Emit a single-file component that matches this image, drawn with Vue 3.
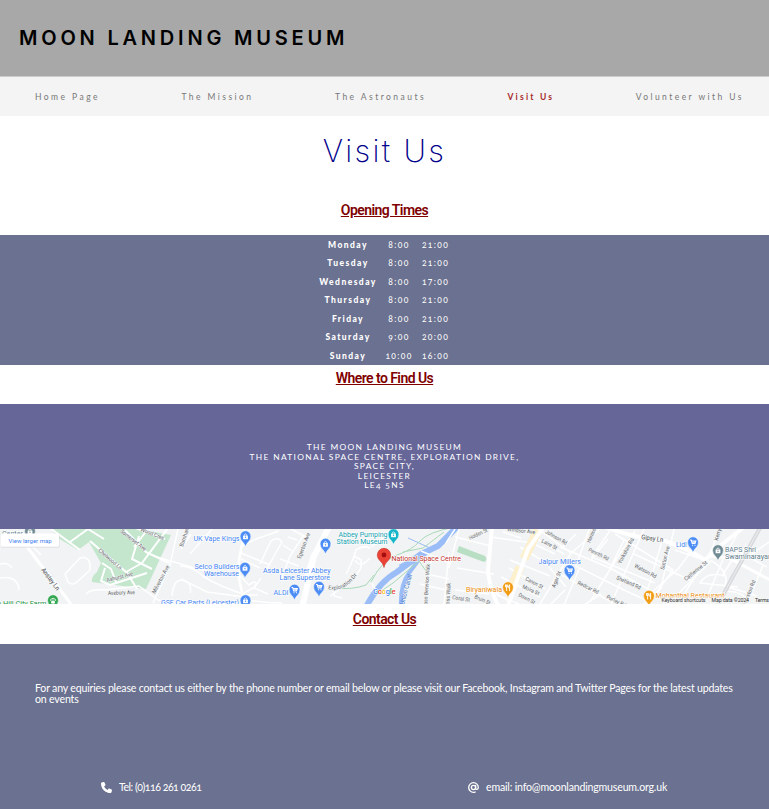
<script setup>
const links = [
  { label: 'Home Page', key: 'home' },
  { label: 'The Mission', key: 'mission' },
  { label: 'The Astronauts', key: 'astronauts' },
  { label: 'Visit Us', key: 'visit', active: true },
  { label: 'Volunteer with Us', key: 'volunteer' }
]

const hours = [
  ['Monday', '8:00', '21:00'],
  ['Tuesday', '8:00', '21:00'],
  ['Wednesday', '8:00', '17:00'],
  ['Thursday', '8:00', '21:00'],
  ['Friday', '8:00', '21:00'],
  ['Saturday', '9:00', '20:00'],
  ['Sunday', '10:00', '16:00']
]

// Map labels; x/y is the start of the baseline, w the drawn width, r the rotation.
const places = [
  { t: 'UK Vape Kings', x: 193.5, y: 12, w: 46, c: 'blue' },
  { t: 'Selco Builders', x: 194.5, y: 40, w: 45, c: 'blue' },
  { t: 'Warehouse', x: 204, y: 47, w: 35, c: 'blue' },
  { t: 'GSE Car Parts (Leicester)', x: 161, y: 76, w: 78, c: 'blue' },
  { t: 'Asda Leicester Abbey', x: 263, y: 43.5, w: 67.5, c: 'blue' },
  { t: 'Lane Superstore', x: 279.5, y: 50.5, w: 50.5, c: 'blue' },
  { t: 'ALDI', x: 273.5, y: 65.5, w: 15, c: 'blue' },
  { t: 'Abbey Pumping', x: 338.5, y: 7.5, w: 49, c: 'teal' },
  { t: 'Station Museum', x: 336.5, y: 14.5, w: 51, c: 'teal' },
  { t: 'National Space Centre', x: 391.5, y: 32, w: 69.5, c: 'red' },
  { t: 'Jalpur Millers', x: 538.5, y: 34.5, w: 42.5, c: 'blue' },
  { t: 'Biryaniwala', x: 466, y: 63, w: 36, c: 'orange' },
  { t: 'Lidl', x: 676, y: 18, w: 10.5, c: 'blue' },
  { t: 'BAPS Shri', x: 725, y: 23, w: 31, c: 'slate' },
  { t: 'Swaminarayan', x: 725, y: 30, w: 47, c: 'slate' },
  { t: 'Mohanthal Restaurant', x: 655.5, y: 69, w: 69, c: 'orange' },
  { t: 'o Hill City Farm', x: -3, y: 76.5, w: 49.5, c: 'green' },
  { t: 'o Center', x: -4, y: 7, w: 27, c: 'slate' }
]

const streets = [
  { t: 'Anstey Ln', x: 41, y: 41, w: 26, r: 53, b: true },
  { t: 'Chelwood Ln', x: 98, y: 22, w: 29, r: 41 },
  { t: 'Somerset Ave', x: 120, y: 3, w: 31, r: 38 },
  { t: 'Wood Cres', x: 140, y: 2, w: 25, r: 21 },
  { t: 'Ashurst Ave', x: 107, y: 53, w: 27, r: -14 },
  { t: 'Avebury Ave', x: 108, y: 66, w: 27, r: -2 },
  { t: 'Milverton Ave', x: 155, y: 65, w: 31, r: -62 },
  { t: 'Burnham Dr', x: 183, y: 18, w: 27, r: -72 },
  { t: 'Egerton Ave', x: 300.5, y: 30, w: 27, r: -69 },
  { t: 'Holden St', x: 470, y: 11, w: 20, r: -26 },
  { t: 'Windsor Ave', x: 507, y: 2, w: 28, r: 6 },
  { t: 'Johnson Rd', x: 545, y: 4, w: 24, r: 30 },
  { t: 'Laire St', x: 541, y: 13, w: 17, r: 28 },
  { t: 'Union Canal', x: 404, y: 76, w: 31, r: -75, water: true },
  { t: 'Ross Bennion Walk', x: 427, y: 79, w: 44, r: -86 },
  { t: 'Ross Walk', x: 449, y: 79, w: 25, r: -86 },
  { t: 'Canon St', x: 525, y: 51, w: 19, r: 28 },
  { t: 'Moira St', x: 522, y: 59, w: 18, r: 24 },
  { t: 'Down St', x: 518, y: 67, w: 18, r: 28 },
  { t: 'Coral St', x: 452, y: 70, w: 18, r: 9 },
  { t: 'Bruin St', x: 474, y: 69, w: 17, r: 24 },
  { t: 'Agar St', x: 555, y: 59, w: 17, r: -68 },
  { t: 'Harrison Rd', x: 590, y: 14, w: 24, r: -66 },
  { t: 'Penrith Rd', x: 588, y: 22, w: 22, r: 26 },
  { t: 'Yorkshire Rd', x: 621, y: 35, w: 28, r: -62 },
  { t: 'Watson Rd', x: 634, y: 38, w: 24, r: 28 },
  { t: 'Shetland Rd', x: 616, y: 50, w: 26, r: 24 },
  { t: 'Redcar Rd', x: 577, y: 55, w: 23, r: 26 },
  { t: 'Purley Rd', x: 606, y: 69, w: 21, r: 26 },
  { t: 'Gipsy Ln', x: 641, y: 10, w: 22, r: 8, b: true },
  { t: 'Sutton Ave', x: 664, y: 41, w: 24, r: -76 },
  { t: 'Catherine St', x: 686, y: 52, w: 28, r: -39 },
  { t: 'Kerrysdale', x: 718, y: 12, w: 25, r: -75 },
  { t: 'Ulverston Rd', x: 745, y: 79, w: 29, r: -68 }
]

const pins = [
  { x: 245.5, y: 8, c: '#4c8df5', k: 'bag' },
  { x: 245, y: 39.5, c: '#4c8df5', k: 'bag' },
  { x: 245.5, y: 72, c: '#4c8df5', k: 'bag' },
  { x: 325.5, y: 15.5, c: '#4c8df5', k: 'bag' },
  { x: 294.5, y: 61.5, c: '#4c8df5', k: 'cart' },
  { x: 319, y: 58.5, c: '#4c8df5', k: 'cart' },
  { x: 393.5, y: 6, c: '#13b5c7', k: 'bag' },
  { x: 508, y: 59, c: '#f29d16', k: 'food' },
  { x: 569.5, y: 42, c: '#4c8df5', k: 'cart' },
  { x: 649, y: 67.5, c: '#f29d16', k: 'food' },
  { x: 693, y: 14, c: '#4c8df5', k: 'cart' },
  { x: 718, y: 22, c: '#718b95', k: 'bag' },
  { x: 53, y: 72, c: '#34a853', k: 'paw' },
  { x: 30, y: 3, c: '#718b95', k: 'bag' }
]
</script>

<template>
  <div class="page">
    <header class="top">
      <h1 class="brand">MOON LANDING MUSEUM</h1>
    </header>
    <nav class="nav">
      <a v-for="l in links" :key="l.key" :class="['link', l.key, { active: l.active }]">{{ l.label }}</a>
    </nav>

    <main>
      <h2 class="title"><span>Visit Us</span></h2>
      <h3 class="sub opening"><span>Opening Times</span></h3>

      <section class="hours">
        <div v-for="row in hours" :key="row[0]" class="row">
          <b>{{ row[0] }}</b><span>{{ row[1] }}</span><span>{{ row[2] }}</span>
        </div>
      </section>

      <h3 class="sub find"><span>Where to Find Us</span></h3>

      <address class="address">
        <div>THE MOON LANDING MUSEUM</div>
        <div>THE NATIONAL SPACE CENTRE, EXPLORATION DRIVE,</div>
        <div>SPACE CITY,</div>
        <div>LEICESTER</div>
        <div>LE4 5NS</div>
      </address>

      <svg class="map" width="769" height="75" viewBox="0 0 769 75">
        <rect width="769" height="75" fill="#f1f3f4" />
        <!-- parks -->
        <path fill="#c3e6cd" d="M51 0H138L171 6L146 60L92 53Q91 48 97 43L101 34L89 13L78 21L58 9Z" />
        <path fill="#b8dfc3" d="M459 17L485 27Q488 31 484 33L457 23Z" />
        <!-- river and canal -->
        <g fill="none" stroke="#9abdf7">
          <path stroke-width="6" d="M366 78Q379 53 397 43L421 25L438 17L458 -3" />
          <path stroke-width="5" d="M400 38L420 28L430 21" />
          <path stroke-width="4" d="M401 77Q400 56 409 44L423 25" />
          <path stroke-width="1" d="M408 9L430 19" />
        </g>
        <g fill="none" stroke="#a9d9b8" stroke-width="1">
          <path d="M371 53Q382 31 397 26T420 12T455 -2M336 59Q352 61 366 56L374 46M377 65L393 54L419 32L426 42M403 23L423 19L444 3" />
        </g>
        <!-- minor roads -->
        <g fill="none" stroke="#fff" stroke-width="1.5" stroke-linejoin="round">
          <path d="M27 -2Q24 9 32 17L41 26M0 49Q18 46 19 61M0 35Q8 33 12 39M65 45L80 29Q87 27 90 34V41L77 53Q73 57 68 53Z" />
          <path d="M86 65Q90 60 105 61L139 57L158 71L185 75M157 28L208 43M178 0L170 36L153 74M213 -1L190 25M172 67Q173 52 181 51Q193 53 190 64" />
          <path d="M180 37Q193 37 204 48Q221 58 246 66H258M181 50L207 63L244 68M181 20L191 5M242 17L256 10L279 2M241 24L270 36M241 30L260 39M260 35L271 12Q278 7 282 13L265 43M237 44L249 56Q258 49 255 58L244 64" />
          <path d="M303 7L290 27L281 51M289 -1L306 8M280 30L299 37M283 16L292 22M288 8L297 11M312 25L304 51M244 70Q262 74 282 74M261 49L254 59L268 65" />
          <path d="M346 45Q353 32 356 21Q363 16 370 19M371 18L384 8M355 31Q360 40 370 29M356 46Q363 39 361 31L354 27M334 61V67L342 69M330 67L339 61M372 54Q377 68 389 59" />
          <path d="M431 31L427 75M449 23L444 75M459 0L449 39M421 22L450 34M455 0L446 14M455 8L491 17M427 45L449 50M455 61L489 65M420 55L446 61M457 39L494 45" />
          <path d="M491 8L532 14L555 25M503 3L521 9M520 18L545 33L566 58M532 7L564 25M510 31L550 47M509 39L545 60M501 48L540 68M497 66L519 75M490 60L508 72" />
          <path d="M538 0L571 24L601 -1M571 24L540 75M560 18L610 39L655 64L644 75M590 -2L576 37L626 62L648 72M556 43L610 72M580 38L564 76M611 0L592 28L655 54" />
          <path d="M635 2L619 26L590 73M615 5L673 41L648 75M624 11L607 46M644 0L633 25L611 75M634 25L694 53M674 0L661 59L648 75M693 20L678 40L650 65M662 12L647 63M720 0L711 22L678 75M675 21L710 33L668 75" />
          <path d="M710 31Q730 42 725 57L757 67M725 47Q707 42 700 54L738 58M724 28L709 64M740 0L730 18L767 38M746 16L731 50M763 36L745 80M715 66Q735 57 748 71M746 29L769 13" />
          <path d="M565 61L546 80M576 5L563 18M608 10L591 31M601 65L584 76M737 23L722 47" />
        </g>
        <!-- park roads -->
        <g fill="none" stroke="#fff" stroke-width="2" stroke-linejoin="round">
          <path d="M50 -1L80 21M70 13L88 0L104 10M90 12L126 43L142 34L168 -1M125 1L146 23L169 34M133 -2L165 10M126 42L137 60M102 34L111 40L116 53M105 39L101 52L110 56L147 44M139 7L132 30L152 40M148 0L134 18" />
        </g>
        <!-- main roads -->
        <g fill="none" stroke="#fff">
          <path stroke-width="3" d="M22 11L40 35L53 51L73 78" />
          <path stroke-width="2.6" d="M245 -1L239 31V49L245 78" />
          <path stroke-width="6" d="M329 -2L314 27L302 79" />
          <path stroke-width="4" d="M492 -2L488 42Q490 62 499 78" />
          <path stroke="#fcf0cd" stroke-width="9" d="M538 1L524 30M520 38L509 65" />
          <path stroke-width="4" d="M545 -4L528 20L507 80" />
          <path stroke-width="4" d="M605 -2Q635 9 665 12Q685 18 705 31L720 17L744 -2" />
          <path stroke-width="3" d="M710 27L729 29L772 52" />
        </g>
        <path fill="none" stroke="#d7d9dc" stroke-width="4" d="M760 -1L731 51L717 78" />
        <path fill="none" stroke="#eceef0" stroke-width="1" d="M760 -1L731 51L717 78" />

        <g class="streets">
          <text v-for="s in streets" :key="s.t" :x="s.x" :y="s.y" :textLength="s.w" lengthAdjust="spacingAndGlyphs" :transform="`rotate(${s.r} ${s.x} ${s.y})`" :class="{ bold: s.b, water: s.water }">{{ s.t }}</text>
          <path id="exp" fill="none" d="M328 60Q344 64 357 46" />
          <text><textPath href="#exp">Exploration Dr</textPath></text>
        </g>

        <g v-for="(p, i) in pins" :key="i" :transform="`translate(${p.x} ${p.y})`">
          <path :fill="p.c" stroke="#fff" stroke-width=".5" d="M0 9.5C-1 5.5-5.4 4.2-5.4-.8A5.4 5.4 0 0 1 5.4-.8C5.4 4.2 1 5.5 0 9.5Z" />
          <path v-if="p.k === 'cart'" fill="none" stroke="#fff" stroke-width="1.1" d="M-3-3H-1.8L-.8.5H2L2.8-2H-1.4M-.4-.8H2M-1 2.2H.1M1.400 2.200H2.500" />
          <g v-else-if="p.k === 'bag'"><rect x="-2.4" y="-1.4" width="4.8" height="3.6" fill="#fff" /><path d="M-1.2-1.3V-2.3Q0-3.8 1.2-2.3V-1.3" fill="none" stroke="#fff" stroke-width=".8" /><circle r=".7" cy=".2" :fill="p.c" /></g>
          <path v-else-if="p.k === 'food'" fill="none" stroke="#fff" stroke-width=".9" d="M-1.4-3.5V3M-2.5-3.5V-1H-.3V-3.5M1.6 3V-3.3Q.5-2.5.7 0H1.6" />
          <g v-else fill="#fff"><ellipse cy="1.2" rx="2" ry="1.6" /><circle cx="-2.2" cy="-1" r=".8" /><circle cx="-.8" cy="-2.3" r=".8" /><circle cx=".9" cy="-2.3" r=".8" /><circle cx="2.3" cy="-1" r=".8" /></g>
        </g>
        <path fill="#ea4335" stroke="#c5221f" stroke-width=".5" d="M384 38.5C383 32.5 377.3 31.5 377.3 26A6.7 6.7 0 0 1 390.7 26C390.7 31.5 385 32.5 384 38.5Z" />
        <circle cx="384" cy="26" r="2.4" fill="#a50e0e" />

        <g class="places">
          <text v-for="p in places" :key="p.t" :class="p.c" :x="p.x" :y="p.y" :textLength="p.w" lengthAdjust="spacingAndGlyphs">{{ p.t }}</text>
        </g>

        <text class="google" x="373" y="64.5" textLength="22.5"><tspan fill="#4285f4">G</tspan><tspan fill="#ea4335">o</tspan><tspan fill="#fbbc05">o</tspan><tspan fill="#4285f4">g</tspan><tspan fill="#34a853">l</tspan><tspan fill="#ea4335">e</tspan></text>

        <rect x="659" y="67.5" width="110" height="7.5" fill="#f5f5f5" fill-opacity=".65" />
        <g class="credits">
          <text x="661.5" y="73" textLength="44">Keyboard shortcuts</text>
          <text x="711.5" y="73" textLength="37.5">Map data ©2024</text>
          <text x="755" y="73" textLength="14">Terms</text>
        </g>

        <rect x="1" y="5.5" width="58.5" height="13" rx="1" fill="#d8dadd" />
        <rect x="1" y="4.5" width="58" height="13.3" rx="1" fill="#fff" />
        <text class="larger" x="8.5" y="13.7" textLength="43">View larger map</text>
      </svg>

      <h3 class="sub contact-h"><span>Contact Us</span></h3>

      <section class="contact">
        <p>For any equiries please contact us either by the phone number or email below or please visit our Facebook, Instagram and Twitter Pages for the latest updates<br>on events</p>
        <div class="ways">
          <div class="way tel">
            <svg width="11" height="11" viewBox="0 0 512 512"><path fill="#fff" d="M164.900 24.600c-7.700-18.600-28-28.500-47.400-23.200l-88 24C12.100 30.200 0 46 0 64c0 247.400 200.600 448 448 448c18 0 33.800-12.100 38.600-29.500l24-88c5.300-19.400-4.600-39.700-23.200-47.400l-96-40c-16.300-6.800-35.200-2.100-46.300 11.600L304.700 368C234.300 334.700 177.300 277.700 144 207.300L193.300 167c13.700-11.200 18.400-30 11.600-46.300l-40-96z" /></svg>
            <span>Tel: (0)116 261 0261</span>
          </div>
          <div class="way mail">
            <svg width="11" height="11" viewBox="0 0 512 512"><g fill="none" stroke="#fff" stroke-width="62" stroke-linecap="round"><circle cx="256" cy="256" r="98" /><path d="M354 160V290C354 370 480 370 480 256A224 224 0 1 0 256 480Q295 480 330 468" /></g></svg>
            <span>email: info@moonlandingmuseum.org.uk</span>
          </div>
        </div>
      </section>
    </main>
  </div>
</template>

<style>
body { margin: 0; background: #fff; }
</style>

<style scoped>
.page { width: 769px; height: 809px; overflow: hidden; font-family: Lato, sans-serif; font-variant-numeric: oldstyle-nums; }
h1, h2, h3, p { margin: 0; }
.top { height: 76px; background: #a8a8a8; display: flex; align-items: center; padding-left: 19px; box-sizing: border-box; }
.brand { font: 600 20px/24px Inter, sans-serif; letter-spacing: 3.8px; color: #000; white-space: nowrap; }
.nav { height: 40px; box-sizing: border-box; border-top: 1px solid #ccc; background: #f4f4f4; display: flex; justify-content: space-between; align-items: center; padding: 0 25px 0 35px; }
.link { font-size: 8.5px; letter-spacing: 2.45px; color: #777; white-space: nowrap; }
.active { color: #a52a2a; font-weight: 700; letter-spacing: 2.2px; }
.title { height: 67px; text-align: center; font: 200 31px/69px Inter, sans-serif; letter-spacing: 2.3px; color: #00008b; }
.sub { box-sizing: border-box; text-align: center; font: 600 14px/18px Roboto, sans-serif; letter-spacing: -.56px; color: #800000; text-decoration: underline; }
.opening { height: 52px; padding-top: 18px; }
.hours { height: 130px; background: #6b7190; color: #fff; display: flex; flex-direction: column; align-items: center; padding-top: 1px; box-sizing: border-box; }
.row { display: grid; grid-template-columns: 64px 38px 35px; justify-content: center; text-align: center; height: 18.45px; line-height: 18.45px; font-size: 8.5px; letter-spacing: 1.35px; }
.row b { font-weight: 900; letter-spacing: 1.45px; }
.find { height: 39px; padding-top: 4px; }
.address { height: 125px; box-sizing: border-box; background: #669; color: #fff; font-style: normal; text-align: center; font-size: 8.4px; line-height: 9.5px; letter-spacing: 1.32px; padding-top: 39px; }
.map { display: block; font-family: Roboto, sans-serif; font-variant-numeric: normal; }
.contact-h { height: 40px; padding-top: 6px; }
.contact { height: 165px; box-sizing: border-box; background: #6b7190; color: #fff; padding: 39px 20px 0 35px; font-size: 10.6px; line-height: 11px; letter-spacing: -.19px; white-space: nowrap; }
.ways { display: flex; padding: 77px 0 0 66px; }
.way { display: flex; gap: 7px; align-items: center; }
.tel { width: 367px; letter-spacing: -.5px; }
.places text { font-size: 7px; stroke: #fff; stroke-width: 1.2px; paint-order: stroke; }
.blue { fill: #3f83f2; }
.teal { fill: #129eaf; }
.red { fill: #c5322b; }
.orange { fill: #ec8c0c; }
.slate { fill: #607d8b; }
.green { fill: #24923f; }
.streets text { font-size: 5.5px; fill: #63676b; stroke: #f4f5f6; stroke-width: .8px; paint-order: stroke; }
.streets .bold { font-size: 6.5px; fill: #44484c; }
.streets .water { font-size: 6.5px; fill: #3f79d0; stroke: none; }
.google { font-size: 7.5px; font-weight: 500; stroke: #fff; stroke-width: 1px; paint-order: stroke; }
.credits text { font-size: 5.2px; fill: #333; }
.larger { font-size: 6px; fill: #3f83f2; }
</style>
